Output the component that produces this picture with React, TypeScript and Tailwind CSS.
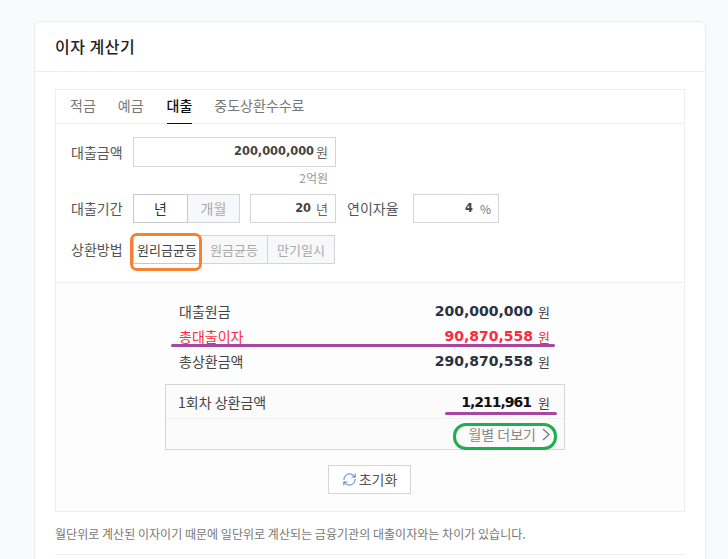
import { RefreshCw } from "lucide-react";

const kr = "font-['Noto_Sans_CJK_KR','Noto_Sans',sans-serif]";
const num = "font-['DejaVu_Sans',sans-serif] font-bold";

function Row({ label, value, red }: { label: string; value: string; red?: boolean }) {
  return (
    <div className={`flex h-[25px] items-center justify-between ${red ? "text-[#fb2b3f]" : "text-[#444]"}`}>
      <span className="text-[14px]">{label}</span>
      <span className="flex items-center gap-[5px]">
        <span className={`${num} text-[14px] ${red ? "text-[#fb2b3f]" : "text-[#2b3240]"}`}>{value}</span>
        <span className="text-[13px]">원</span>
      </span>
    </div>
  );
}

export default function App() {
  return (
    <div className={`relative h-[559px] w-[728px] overflow-hidden bg-[#f9fafc] pt-[21px] pl-[34px] ${kr}`}>
      <div className="h-[600px] w-[672px] rounded-t-[6px] border border-[#e9ebee] bg-white">
        <div className="flex h-[50px] items-center border-b border-[#eee] pb-[2px] pl-[20px] text-[16px] font-medium tracking-[0.5px] text-[#222]">
          이자 계산기
        </div>
        <div className="px-[20px] pt-[17px]">
          <div className="border border-[#eee]">
            <div className="flex h-[34px] items-center gap-[22px] border-b border-[#eee] pl-[14px] text-[14px] text-[#777]">
              <span className="pb-[2px]">적금</span>
              <span className="pb-[2px]">예금</span>
              <span className="relative ml-[1px] flex h-full items-center pb-[2px] font-medium text-[#111]">
                대출
                <span className="absolute right-0 bottom-[-1px] left-0 h-px bg-[#111]" />
              </span>
              <span className="pb-[2px]">중도상환수수료</span>
            </div>

            <div className="h-[159px] border-b border-[#eee] pt-[13px] pl-[15px] text-[14px] text-[#555]">
              <div className="flex items-center">
                <span className="w-[62px]">대출금액</span>
                <div className="flex h-[30px] w-[203px] items-center justify-end gap-[2px] border border-[#d5d5d5] pr-[7px]">
                  <span className={`${num} text-[11.4px] text-[#444]`}>200,000,000</span>
                  <span className="text-[13px] text-[#666]">원</span>
                </div>
              </div>
              <div className="flex h-[27px] w-[257px] items-center justify-end pb-[6px] text-[12px] text-[#999]">2억원</div>
              <div className="flex items-center">
                <span className="w-[62px]">대출기간</span>
                <div className="flex h-[29px] w-[55px] items-center justify-center border border-[#c8c8c8] text-[#333]">년</div>
                <div className="flex h-[29px] w-[52px] items-center justify-center border-y border-r border-[#d5d5d5] bg-[#f7f8fa] text-[#aaa]">개월</div>
                <div className="ml-[10px] flex h-[29px] w-[86px] items-center justify-end gap-[5px] border border-[#d5d5d5] pr-[7px]">
                  <span className={`${num} text-[11.4px] text-[#444]`}>20</span>
                  <span className="text-[13px] text-[#666]">년</span>
                </div>
                <span className="ml-[11px] w-[66px]">연이자율</span>
                <div className="flex h-[29px] w-[86px] items-center justify-end gap-[7px] border border-[#d5d5d5] pr-[7px]">
                  <span className={`${num} text-[11.4px] text-[#444]`}>4</span>
                  <span className="text-[12px] text-[#777]">%</span>
                </div>
              </div>
              <div className="mt-[12px] flex items-center">
                <span className="w-[62px]">상환방법</span>
                <div className="flex h-[29px] w-[68px] items-center justify-center border border-[#c8c8c8] text-[13px] text-[#444]">원리금균등</div>
                <div className="flex h-[29px] w-[67px] items-center justify-center border-y border-r border-[#d5d5d5] bg-[#f7f8fa] text-[13px] text-[#aaa]">원금균등</div>
                <div className="flex h-[29px] w-[67px] items-center justify-center border-y border-r border-[#d5d5d5] bg-[#f7f8fa] text-[13px] text-[#aaa]">만기일시</div>
              </div>
            </div>

            <div className="h-[228px] bg-[#fdfdfd] pt-[16px]">
              <div className="ml-[123px] w-[371px]">
                <Row label="대출원금" value="200,000,000" />
                <Row label="총대출이자" value="90,870,558" red />
                <Row label="총상환금액" value="290,870,558" />
              </div>
              <div className="mt-[10px] ml-[109px] w-[400px] border border-[#d5d5d5] bg-[#fbfbfb]">
                <div className="flex h-[34px] items-center justify-between border-b border-[#f0f0f0] pt-[2px] pr-[14px] pl-[12px] text-[14px] text-[#444]">
                  <span>1회차 상환금액</span>
                  <span className="flex items-center gap-[7px]">
                    <span className={`${num} text-[14px] tracking-[-1px] text-[#111]`}>1,211,961</span>
                    <span className="text-[13px]">원</span>
                  </span>
                </div>
                <div className="flex h-[30px] items-center justify-end gap-[6px] pr-[14px] text-[14px] text-[#888]">
                  <span>월별 더보기</span>
                  <svg width="8" height="13" viewBox="0 0 8 13" fill="none" stroke="#777" strokeWidth="1.3">
                    <path d="M1 1l6 5.5L1 12" />
                  </svg>
                </div>
              </div>
              <div className="mt-[15px] flex justify-center">
                <div className="ml-[-1px] flex h-[29px] w-[83px] items-center justify-center gap-[2px] border border-[#d5d5d5] bg-white text-[14px] text-[#555]">
                  <RefreshCw size={15} strokeWidth={1.5} className="text-[#3f6fd0]" />
                  <span>초기화</span>
                </div>
              </div>
            </div>
          </div>
          <p className="mt-[13px] border-b border-[#eee] pb-[11px] text-[12px] tracking-[0.03px] text-[#777]">
            월단위로 계산된 이자이기 때문에 일단위로 계산되는 금융기관의 대출이자와는 차이가 있습니다.
          </p>
        </div>
      </div>

      <div className="absolute top-[233px] left-[130px] h-[38px] w-[72px] rounded-[7px] border-[3px] border-[#f58233]" />
      <div className="absolute top-[344px] left-[171px] h-[3px] w-[384px] rounded-full bg-[#a8479f]" />
      <div className="absolute top-[412px] left-[445px] h-[3px] w-[112px] rounded-full bg-[#a8479f]" />
      <div className="absolute top-[423px] left-[453px] h-[27px] w-[104px] rounded-[13px] border-[3px] border-[#1fae4e]" />
    </div>
  );
}
